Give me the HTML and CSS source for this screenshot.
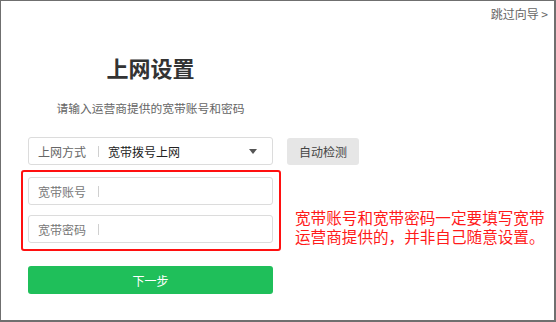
FILE: index.html
```html
<!DOCTYPE html>
<html lang="zh-CN">
<head>
<meta charset="utf-8">
<title>上网设置</title>
<link rel="stylesheet" href="styles.css">
</head>
<body>
<div class="frame">
  <div class="topbar"><a class="skip" href="#">跳过向导 &gt;</a></div>
  <div class="main">
    <div class="head">
      <h1 class="title">上网设置</h1>
      <p class="subtitle">请输入运营商提供的宽带账号和密码</p>
    </div>
    <div class="mode-row">
      <div class="field select">
        <span class="label">上网方式</span>
        <span class="sep"></span>
        <span class="value">宽带拨号上网</span>
        <span class="caret"></span>
      </div>
      <button class="detect" type="button">自动检测</button>
    </div>
    <div class="cred-row">
      <div class="cred-group">
        <div class="field">
          <span class="label">宽带账号</span>
          <span class="sep"></span>
          <span class="value"></span>
        </div>
        <div class="field">
          <span class="label">宽带密码</span>
          <span class="sep"></span>
          <span class="value"></span>
        </div>
      </div>
      <p class="note"><span class="note-line">宽带账号和宽带密码一定要填写宽带</span><span class="note-line">运营商提供的，并非自己随意设置。</span></p>
    </div>
    <button class="next" type="button">下一步</button>
  </div>
</div>
</body>
</html>
```

FILE: styles.css
```css
html, body {
  margin: 0;
  padding: 0;
  background: #fff;
}
body {
  font-family: "Noto Sans CJK SC", "Noto Sans", sans-serif;
  color: #333;
}
.frame {
  width: 556px;
  height: 322px;
  box-sizing: border-box;
  border: 1px solid #6f6f6f;
  border-right-width: 2px;
  border-bottom-width: 2px;
  background: #fff;
  overflow: hidden;
}
.topbar {
  display: flex;
  justify-content: flex-end;
  padding: 5px 6px 0 0;
  height: 18px;
}
.skip {
  font-size: 12px;
  line-height: 16px;
  color: #666;
  text-decoration: none;
}
.main {
  padding-left: 27px;
}
.head {
  width: 245px;
}
.title {
  margin: 28px 0 0;
  font-size: 22px;
  line-height: 30px;
  font-weight: bold;
  color: #333;
  text-align: center;
}
.subtitle {
  margin: 17px 0 0;
  font-size: 11.75px;
  line-height: 18px;
  color: #666;
  text-align: center;
  white-space: nowrap;
}
.mode-row {
  display: flex;
  align-items: center;
  margin-top: 20px;
}
.field {
  width: 245px;
  height: 28px;
  flex: none;
  box-sizing: border-box;
  border: 1px solid #dcdcdc;
  border-radius: 3px;
  background: #fff;
  display: flex;
  align-items: center;
  padding-left: 9px;
  font-size: 12px;
}
.label {
  color: #777;
  width: 48px;
}
.select .label {
  color: #666;
}
.sep {
  width: 1px;
  height: 11px;
  background: #d0d0d0;
  margin-left: 12px;
}
.value {
  margin-left: 9px;
  color: #222;
  flex: 1;
}
.caret {
  width: 0;
  height: 0;
  border-left: 4px solid transparent;
  border-right: 4px solid transparent;
  border-top: 5px solid #555;
  margin-right: 15px;
}
.detect {
  margin-left: 14px;
  width: 72px;
  height: 27px;
  flex: none;
  border: none;
  border-radius: 3px;
  background: #e6e6e6;
  color: #444;
  font-family: inherit;
  font-size: 12px;
  padding: 0;
}
.cred-row {
  display: flex;
  align-items: flex-start;
  margin-top: 12px;
}
.cred-group {
  position: relative;
  display: flex;
  flex-direction: column;
  gap: 10px;
  flex: none;
}
.cred-group::before {
  content: "";
  position: absolute;
  left: -7px;
  top: -7px;
  right: -8px;
  bottom: -8px;
  border: 2px solid #ff1010;
  border-radius: 3px;
}
.note {
  margin: 31px 0 0 22px;
  font-size: 15.6px;
  color: #ff1a1a;
  white-space: nowrap;
}
.note-line {
  display: block;
  height: 18.6px;
  line-height: 18.6px;
}
.next {
  display: block;
  margin-top: 21px;
  width: 245px;
  height: 28px;
  border: none;
  border-radius: 3px;
  background: #1fbf5a;
  color: #fff;
  font-family: inherit;
  font-size: 12px;
  padding: 0;
}
```
